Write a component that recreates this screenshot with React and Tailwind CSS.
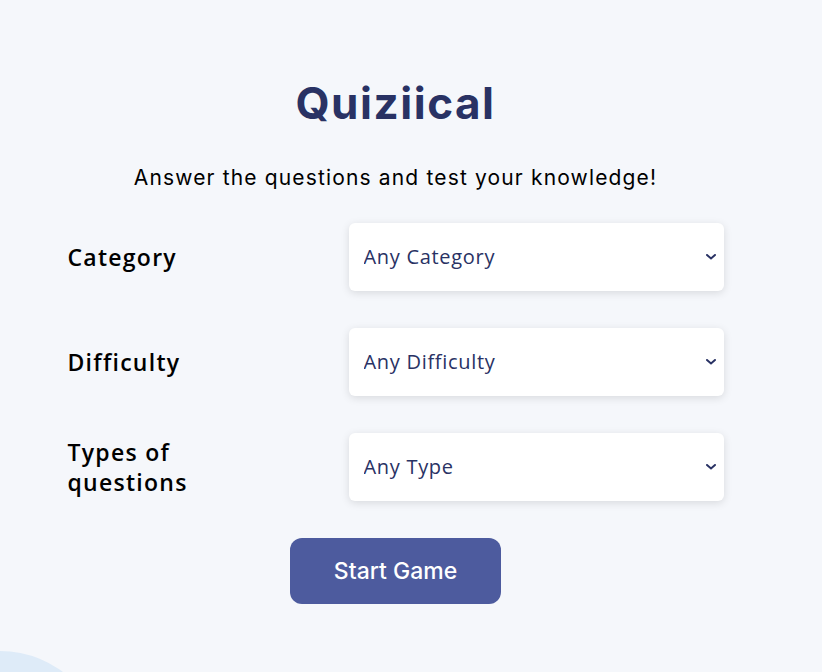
import React, { useState } from "react";

const options = [
  { label: "Category", name: "category", value: "Any Category" },
  { label: "Difficulty", name: "difficulty", value: "Any Difficulty" },
  { label: "Types of questions", name: "type", value: "Any Type" },
];

const Chevron = () => (
  <svg
    width="10"
    height="6"
    viewBox="0 0 10 6"
    className="pointer-events-none absolute right-[8px] top-1/2 -translate-y-1/2"
  >
    <path d="M1 1l4 3.5L9 1" fill="none" stroke="#293264" strokeWidth="2" strokeLinecap="round" />
  </svg>
);

const App = () => {
  const [form, setForm] = useState({
    category: "Any Category",
    difficulty: "Any Difficulty",
    type: "Any Type",
  });

  const handleChange = (e) => {
    setForm({ ...form, [e.target.name]: e.target.value });
  };

  return (
    <div className="relative min-h-[672px] w-full overflow-hidden bg-[#F5F7FB]">
      <div className="absolute left-[-105px] top-[651px] h-[210px] w-[210px] rounded-full bg-[#DEEBF8]" />
      <div className="relative mx-0 flex w-[791px] flex-col items-center pt-[75px]">
        <h1 className="font-['Inter',sans-serif] text-[44px] font-bold leading-[56px] tracking-[0.035em] text-[#293264]">
          Quiziical
        </h1>
        <p className="mt-[33px] font-['Inter',sans-serif] text-[21px] leading-[28px] tracking-[0.055em] text-black">
          Answer the questions and test your knowledge!
        </p>

        <div className="mt-[31px] flex w-[656px] flex-col gap-[37px]">
          {options.map((opt) => (
            <div key={opt.name} className="flex items-center justify-between">
              <label className="w-[160px] font-['Open_Sans',sans-serif] text-[23px] font-semibold leading-[30px] tracking-[0.055em] text-black">
                {opt.label}
              </label>
              <div className="relative w-[375px]">
                <select
                  name={opt.name}
                  value={form[opt.name]}
                  onChange={handleChange}
                  className="h-[68px] w-full appearance-none rounded-[6px] bg-white pl-[15px] font-['Open_Sans',sans-serif] text-[20px] tracking-[0.035em] text-[#293264] shadow-[0_2px_8px_rgba(0,0,0,0.12)] outline-none"
                >
                  <option>{opt.value}</option>
                </select>
                <Chevron />
              </div>
            </div>
          ))}
        </div>

        <button className="mt-[37px] h-[66px] w-[211px] rounded-[12px] bg-[#4D5B9E] font-['Inter',sans-serif] text-[23px] font-medium text-white">
          Start Game
        </button>
      </div>
    </div>
  );
};

export default App;
